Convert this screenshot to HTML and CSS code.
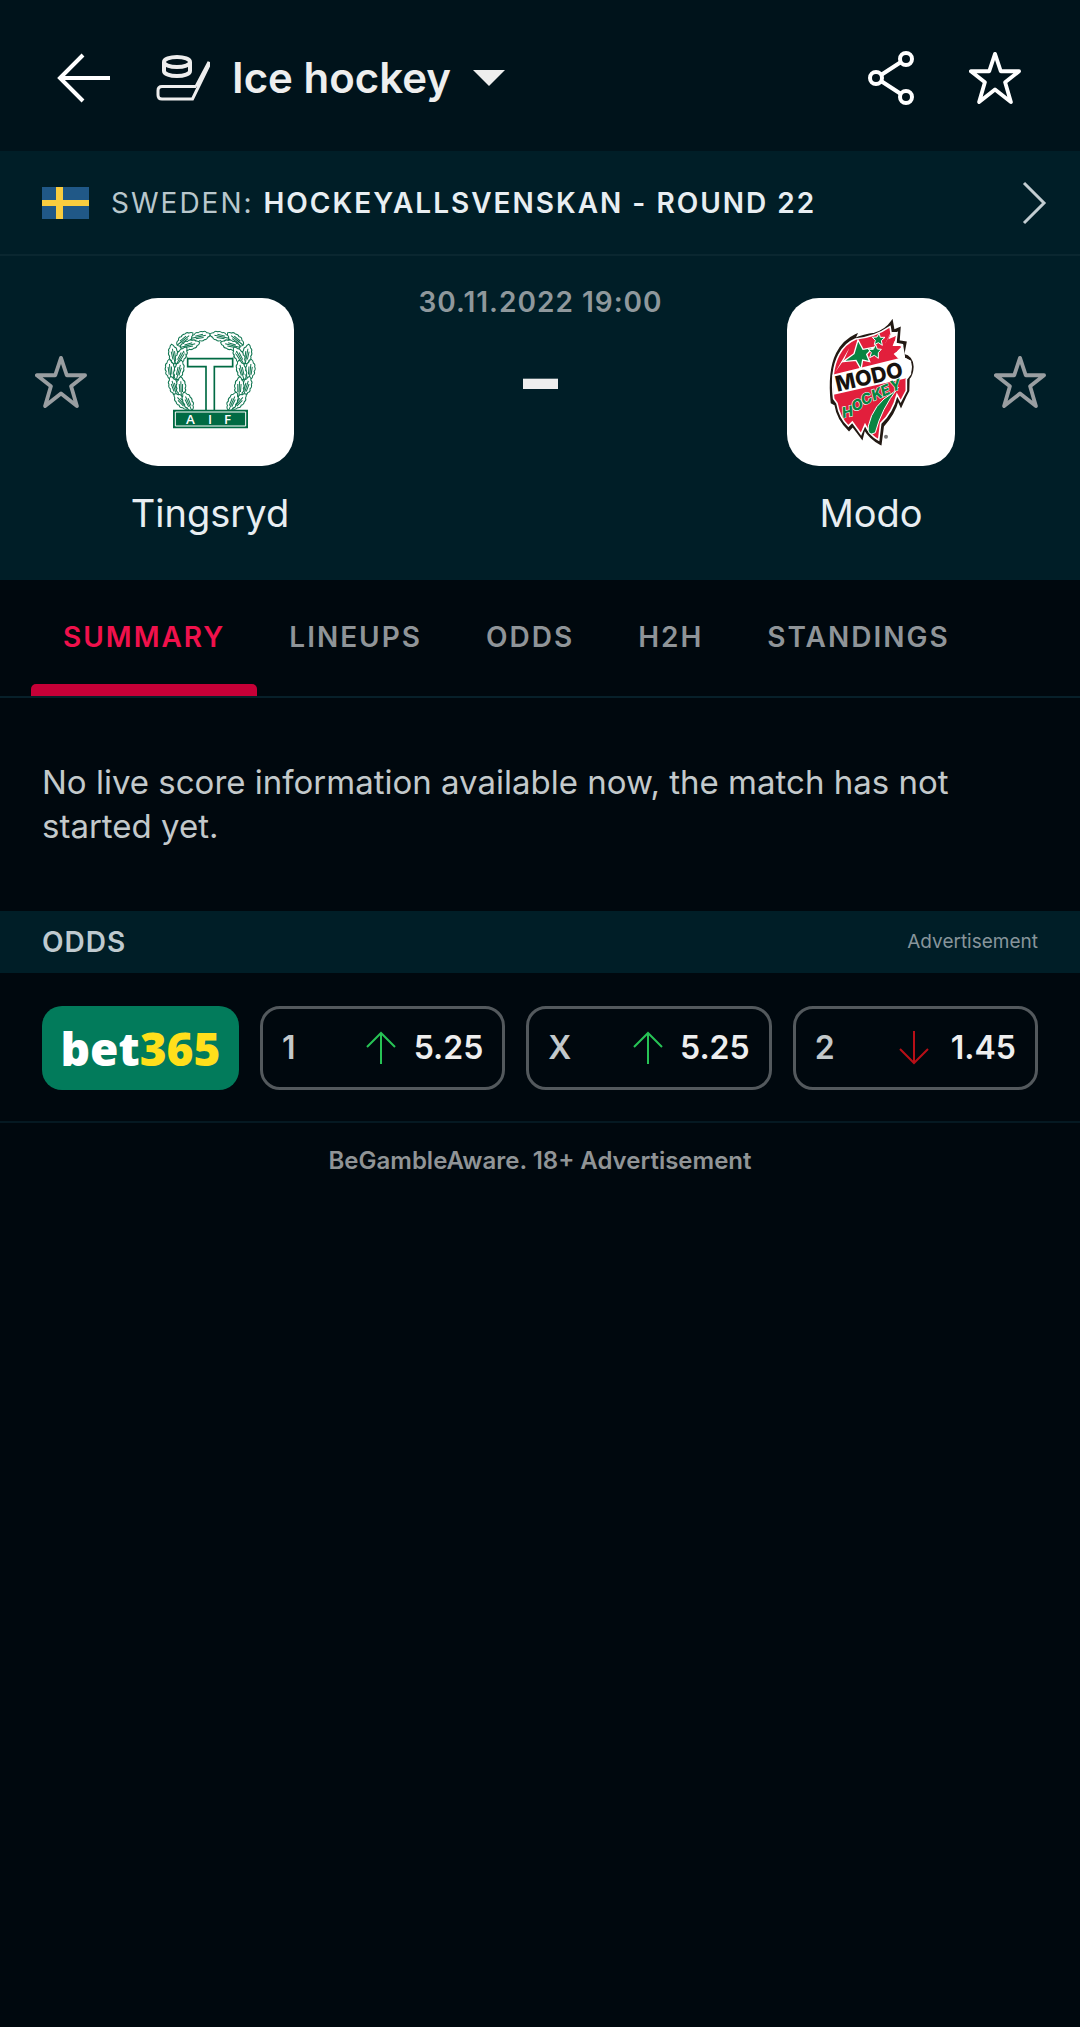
FILE: index.html
```html
<!DOCTYPE html>
<html lang="en">
<head>
<meta charset="utf-8">
<meta name="viewport" content="width=device-width, initial-scale=1">
<title>Tingsryd - Modo</title>
<link rel="stylesheet" href="styles.css">
</head>
<body>
<svg class="defs" aria-hidden="true">
  <symbol id="star" viewBox="0 0 54 56"><path d="M27 3 33 21H52L37.500 32.500 43.500 53 27 40 10.500 53 16.500 32.500 2 21H21Z" fill="none" stroke="currentColor" stroke-width="4" stroke-linejoin="round"/></symbol>
  <symbol id="up" viewBox="0 0 30 34"><path d="M15 33V2M1 16 15 2 29 16" fill="none" stroke="currentColor" stroke-width="2"/></symbol>
  <symbol id="down" viewBox="0 0 30 34"><path d="M15 0V32M1 18 15 32 29 18" fill="none" stroke="currentColor" stroke-width="2"/></symbol>
</svg>

<header class="topbar">
  <button class="icon-button" aria-label="Back">
    <svg width="54" height="50" viewBox="0 0 54 50"><path d="M53 25H3M26 2 3 25 26 48" fill="none" stroke="currentColor" stroke-width="4"/></svg>
  </button>
  <button class="sport">
    <svg width="54" height="48" viewBox="0 0 54 48" fill="none" stroke="currentColor" stroke-width="4"><ellipse cx="21" cy="8" rx="13" ry="5"/><path d="M8 8V17c0 3 6 5 13 5s13-2 13-5V8"/><path d="M40 32.500H6q-4 0-4 4V41q0 4 4 4H36.500L53 11V8L40 32.500" stroke-width="3"/></svg>
    <span class="sport-name">Ice hockey</span>
    <svg width="32" height="16" viewBox="0 0 32 16"><path d="M0 0H32L16 16Z" fill="currentColor"/></svg>
  </button>
  <div class="actions">
    <button class="icon-button" aria-label="Share">
      <svg width="48" height="56" viewBox="0 0 48 56" fill="none" stroke="currentColor" stroke-width="4"><circle cx="9" cy="28" r="6"/><circle cx="39" cy="9" r="6"/><circle cx="39" cy="47" r="6"/><path d="M14 25 34 12M14 31 34 44"/></svg>
    </button>
    <button class="icon-button" aria-label="Add match to favourites"><svg width="52" height="54"><use href="#star"/></svg></button>
  </div>
</header>

<a class="league" href="#league">
  <svg width="47" height="32" viewBox="0 0 47 32"><path fill="#205887" d="M0 0H47V32H0Z"/><path fill="#f9cc3f" d="M14 0h7v13H47v6H21V32H14V19H0V13H14Z"/></svg>
  <span class="league-name">SWEDEN: <strong>HOCKEYALLSVENSKAN - ROUND 22</strong></span>
  <svg class="chevron" width="26" height="44" viewBox="0 0 26 44"><path d="M3 2 23 22 3 42" fill="none" stroke="currentColor" stroke-width="3"/></svg>
</a>

<main>
<section class="match">
  <button class="icon-button favourite" aria-label="Follow Tingsryd"><svg width="52" height="54"><use href="#star"/></svg></button>
  <div class="team">
    <div class="badge">
      <svg viewBox="18 22 504 504" role="img" aria-label="Tingsryd">
        <defs>
          <path id="leaf" d="M-30 0Q-27-10-18-9Q-12-17-5-12Q2-17 9-12Q17-14 20-7Q27-6 30 0Q27 6 20 7Q17 14 9 12Q2 17-5 12Q-12 17-18 9Q-27 10-30 0ZM-28 0H16M-16-4 8-5M-16 4 8 5"/>
          <g id="branch">
            <use href="#leaf" transform="translate(242 137) rotate(-12)"/>
            <use href="#leaf" transform="translate(195 145) rotate(-38)"/>
            <use href="#leaf" transform="translate(210 163) rotate(-14)"/>
            <use href="#leaf" transform="translate(160 190) rotate(-100)"/>
            <use href="#leaf" transform="translate(184 195) rotate(-60)"/>
            <use href="#leaf" transform="translate(150 236) rotate(-96)"/>
            <use href="#leaf" transform="translate(177 238) rotate(-75)"/>
            <use href="#leaf" transform="translate(161 286) rotate(-108)"/>
            <use href="#leaf" transform="translate(183 288) rotate(-92)"/>
            <use href="#leaf" transform="translate(183 332) rotate(-132)"/>
            <use href="#leaf" transform="translate(203 332) rotate(-114)"/>
          </g>
        </defs>
        <g fill="#fff" stroke="#0f7550" stroke-width="3">
          <use href="#branch"/>
          <use href="#branch" transform="translate(541 0) scale(-1 1)"/>
        </g>
        <path d="M190 182Q200 196 203 203M351 182Q341 196 338 203" stroke="#1c7d58" stroke-width="2" fill="none"/>
        <path d="M203 204H338V228H283V362H258V228H203Z" fill="#fff" stroke="#006a43" stroke-width="5"/>
        <path fill="#006a43" d="M159 357H384V413H159Z"/>
        <path fill="none" stroke="#fff" stroke-width="3" d="M166 364H377V406H166Z"/>
        <text class="aif" x="198 264 312" y="401">AIF</text>
      </svg>
    </div>
    <span class="team-name">Tingsryd</span>
  </div>
  <div class="score">
    <time class="date" datetime="2022-11-30T19:00">30.11.2022 19:00</time>
    <span class="result">–</span>
  </div>
  <div class="team">
    <div class="badge">
      <svg viewBox="18 22 504 504" role="img" aria-label="Modo Hockey">
        <defs>
          <path id="flame" d="M333 92 338 120 356 112 353 152 374 155 367 192Q394 198 395 228Q394 252 383 264L382 300 373 318 360 346 351 326Q340 370 306 406L299 460Q268 444 250 414L243 443 215 406 204 418Q170 386 163 342L152 336Q142 240 168 188Q188 150 225 133L219 146Q250 132 280 129Q314 120 333 92Z"/>
        </defs>
        <use href="#flame" fill="#231a14" stroke="#231a14" stroke-width="6"/>
        <path d="M327 108 331 132 348 126 344 160 364 164 356 196 388 212 388 250 376 266 376 300 359 332 348 312Q334 366 299 398L293 448Q268 436 252 402L240 430 214 394 202 406Q176 382 168 338L158 324Q148 240 174 192Q192 158 224 145Q280 140 327 108Z" fill="#e21f3c" stroke="#fff" stroke-width="5"/>
        <path d="M163 244 205 172 190 206ZM330 124 312 160 346 142 324 178 362 168 338 190 352 204 372 205V196L366 160 346 156 348 124Z" fill="#fff"/>
        <path d="M332 124 322 146 345 136 335 166 360 166 346 184 310 196 318 164 304 172Z" fill="#e21f3c"/>
        <path d="M154 252 366 200Q394 208 393 228Q392 250 380 262L158 312Z" fill="#fff"/>
        <g fill="#088442" stroke="#fff">
          <path stroke-width="4" d="M231 148 246 176 278 170 257 191 266 213 245 208 240 236 225 209 186 213 219 189Z"/>
          <path stroke-width="3" d="M294 128 298 140 312 140 301 150 304 164 292 156 280 162 283 149 274 140 288 139Z"/>
          <path stroke-width="3" d="M284 162 289 175 301 176 292 186 292 203 280 194 266 201 271 186 262 176 277 176Z"/>
          <path stroke-width="3" d="M352 290Q300 356 283 426Q258 440 262 406Q276 340 336 306Z"/>
        </g>
        <text class="modo" transform="rotate(-13 270 270)" x="164" y="280">MODO</text>
        <text class="hockey" x="186 218 248 278 306 332" y="382 363 345 330 318 304" rotate="-12 -22 -27 -22 -22 -18">HOCKEY</text>
        <circle cx="315" cy="438" r="6" fill="#777"/>
      </svg>
    </div>
    <span class="team-name">Modo</span>
  </div>
  <button class="icon-button favourite" aria-label="Follow Modo"><svg width="52" height="54"><use href="#star"/></svg></button>
</section>

<nav class="tabs">
  <a class="tab active" href="#summary" aria-current="page">SUMMARY</a>
  <a class="tab" href="#lineups">LINEUPS</a>
  <a class="tab" href="#odds">ODDS</a>
  <a class="tab" href="#h2h">H2H</a>
  <a class="tab" href="#standings">STANDINGS</a>
</nav>

<p class="notice">No live score information available now, the match has not started yet.</p>

<section id="odds">
  <div class="odds-head">
    <h2 class="odds-title">ODDS</h2>
    <span class="ad-label">Advertisement</span>
  </div>
  <div class="odds-row">
    <a class="bookmaker" href="#bet365">bet<span class="bookmaker-number">365</span></a>
    <button class="odd"><span class="outcome">1</span><svg class="rise" width="30" height="34"><use href="#up"/></svg><span class="price">5.25</span></button>
    <button class="odd"><span class="outcome">X</span><svg class="rise" width="30" height="34"><use href="#up"/></svg><span class="price">5.25</span></button>
    <button class="odd"><span class="outcome">2</span><svg class="fall" width="30" height="34"><use href="#down"/></svg><span class="price">1.45</span></button>
  </div>
</section>
</main>
<footer class="disclaimer">BeGambleAware. 18+ Advertisement</footer>
</body>
</html>
```
FILE: styles.css
```css
* { box-sizing: border-box; }

body {
  margin: 0;
  min-height: 100vh;
  background: #00080e;
  color: #eeeeee;
  font-family: Inter, "Liberation Sans", sans-serif;
}

svg { display: block; flex: none; }

.defs { position: absolute; width: 0; height: 0; }

button {
  padding: 0;
  border: 0;
  background: none;
  color: inherit;
  font: inherit;
  cursor: pointer;
}

a { color: inherit; text-decoration: none; }

.topbar {
  display: flex;
  align-items: center;
  gap: 45px;
  height: 151px;
  padding: 4px 59px 0 57px;
  background: #00131b;
}

.icon-button { color: #ffffff; }

.sport { display: flex; align-items: center; gap: 22px; }

.sport-name { font-size: 42px; font-weight: 600; line-height: 52px; }

.actions { display: flex; align-items: center; gap: 54px; margin-left: auto; }

.league {
  display: flex;
  align-items: center;
  gap: 22px;
  height: 105px;
  padding: 0 33px 0 42px;
  border-bottom: 2px solid #0a2730;
  background: #001e27;
}

.league-name { color: #b9c7cc; font-size: 28px; line-height: 36px; letter-spacing: 2px; }

.league-name strong { color: #e8eef2; font-weight: 600; }

.chevron { margin-left: auto; color: #c3cdd1; }

.match {
  display: flex;
  align-items: flex-start;
  gap: 39px;
  padding: 28px 34px 43px 35px;
  background: #001e27;
}

.favourite { display: flex; align-items: center; height: 168px; margin-top: 14px; color: #999ea1; }

.team {
  display: flex;
  flex-direction: column;
  align-items: center;
  gap: 23px;
  width: 168px;
  padding-top: 14px;
}

.badge { width: 168px; height: 168px; border-radius: 32px; background: #ffffff; overflow: hidden; }

.team-name { color: #e8eef2; font-size: 38px; line-height: 48px; }

.score { display: flex; flex: 1; flex-direction: column; align-items: center; gap: 39px; }

.date { color: #8f989c; font-size: 28px; font-weight: 600; line-height: 36px; letter-spacing: 1px; }

.result { font-size: 70px; font-weight: 900; line-height: 40px; }

.aif { fill: #ffffff; font: 600 40px "Open Sans", sans-serif; }

.modo { fill: #17120e; font: 800 64px Inter, sans-serif; }

.hockey {
  fill: #088442;
  stroke: #ffffff;
  stroke-width: 3px;
  paint-order: stroke;
  font: italic 800 44px Inter, sans-serif;
}

.tabs {
  display: flex;
  height: 118px;
  padding: 0 31px;
  border-bottom: 2px solid #07202a;
}

.tab {
  display: flex;
  flex-direction: column;
  padding: 39px 32px 0;
  color: #8f9498;
  font-size: 28px;
  font-weight: 600;
  line-height: 36px;
  letter-spacing: 2px;
}

.active { color: #f0114c; }

.active::after {
  content: "";
  height: 12px;
  margin: auto -32px 0;
  border-radius: 5px 5px 0 0;
  background: #c60037;
}

.notice {
  margin: 0;
  padding: 62px 42px 63px;
  color: #c3c9cb;
  font-size: 33px;
  line-height: 44px;
}

.odds-head {
  display: flex;
  align-items: center;
  justify-content: space-between;
  height: 62px;
  padding: 0 42px;
  background: #001e27;
}

.odds-title {
  margin: 0;
  color: #bfcacf;
  font-size: 28px;
  font-weight: 600;
  line-height: 36px;
  letter-spacing: 1px;
}

.ad-label { color: #87959b; font-size: 19px; line-height: 28px; }

.odds-row {
  display: flex;
  gap: 21px;
  padding: 33px 42px 31px;
  border-bottom: 2px solid #051922;
}

.bookmaker {
  display: flex;
  align-items: center;
  justify-content: center;
  width: 197px;
  height: 84px;
  border-radius: 20px;
  background: #027b5b;
  color: #ffffff;
  font-family: "Open Sans", sans-serif;
  font-size: 46px;
  font-weight: 800;
  line-height: 60px;
}

.bookmaker-number { color: #ffdf1b; }

.odd {
  display: flex;
  flex: 1;
  align-items: center;
  gap: 17px;
  height: 84px;
  padding: 0 19px;
  border: 3px solid #53595d;
  border-radius: 20px;
  font-size: 32px;
  font-weight: 600;
  line-height: 40px;
}

.outcome { margin-right: auto; color: #c3c9cb; }

.price { min-width: 70px; text-align: right; }

.rise { color: #27c355; }

.fall { color: #b80f17; }

.disclaimer {
  padding: 20px 42px;
  color: #909496;
  font-size: 24px;
  font-weight: 600;
  line-height: 36px;
  text-align: center;
}
```
